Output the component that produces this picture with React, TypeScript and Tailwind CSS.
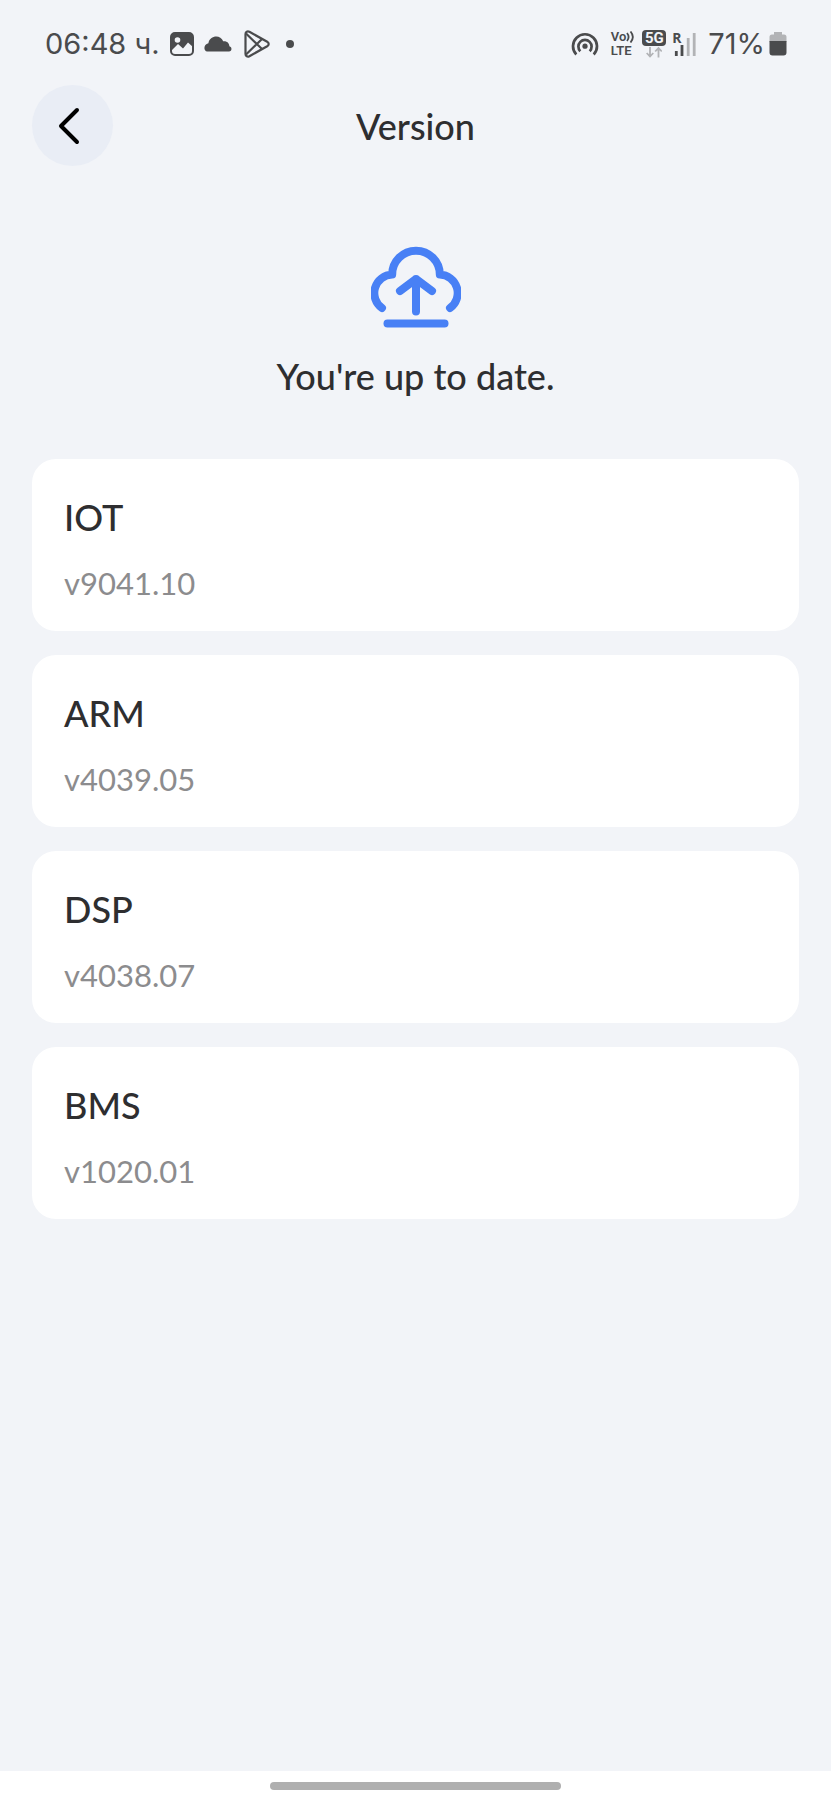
interface VersionCardProps {
  name: string;
  version: string;
}

const StatusBar = () => {
  return (
    <div className="flex items-center justify-between h-[84px] pl-[45px] pr-11 pt-1 text-[#4a4b4d]">
      <div className="flex items-center">
        <span className="font-['Inter',sans-serif] text-[29px] leading-9">06:48 ч.</span>
        <svg className="ml-2.5 w-6 h-6" viewBox="0 0 24 24" fill="none">
          <rect x="1" y="1" width="22" height="22" rx="4" stroke="currentColor" strokeWidth="2" />
          <path
            d="M1 5a4 4 0 0 1 4-4h14a4 4 0 0 1 4 4v10l-5-4.500-5 6-5-4.500-7 7z"
            fill="currentColor"
          />
          <circle cx="7.500" cy="8" r="2.800" fill="#f2f4f8" />
        </svg>
        <svg className="ml-2.5 w-7 h-4" viewBox="0 0 28 16" fill="currentColor">
          <path d="M3.200 15.500C-.8 14.800-.6 8.200 4.400 7.200 5.500-.5 16.500-2 19.200 5.300c4-.4 6 2 6.200 5 3 1 2.600 5-.4 5.200z" />
        </svg>
        <svg
          className="ml-3 w-[26px] h-7"
          viewBox="0 0 26 28"
          fill="none"
          stroke="currentColor"
          strokeWidth="2.200"
          strokeLinejoin="round"
        >
          <path d="M1.500 4v20c0 2.200 2 3.200 3.900 2.200l17.800-10c2-1.200 2-3.200 0-4.400L5.400 1.800C3.500.8 1.500 1.800 1.500 4z" />
          <path d="M2 3.500 18 19M2 24.500 18 9" />
        </svg>
        <span className="ml-4 w-2 h-2 rounded-full bg-[#4a4b4d]" />
      </div>

      <div className="flex items-center">
        <svg
          className="w-7 h-6"
          viewBox="0 0 28 24"
          fill="none"
          stroke="currentColor"
          strokeWidth="2.700"
        >
          <path d="M5.300 22.500a12 12 0 1 1 17.400 0" />
          <path d="M9.300 19.200a6.600 6.600 0 1 1 9.400 0" />
          <circle cx="14" cy="14.200" r="2.600" fill="currentColor" stroke="none" />
        </svg>
        <span className="ml-3 flex flex-col font-['Roboto',sans-serif] font-semibold text-[13px] leading-[14px]">
          <span className="flex items-center">
            Vo
            <svg className="w-2 h-3" viewBox="0 0 8 12" fill="none" stroke="currentColor" strokeWidth="1.800">
              <path d="M1 2c2 2.500 2 5.500 0 8M4.500.5c3 3.500 3 7.500 0 11" />
            </svg>
          </span>
          <span>LTE</span>
        </span>
        <span className="ml-2 flex flex-col items-center">
          <span className="w-6 h-4 rounded-sm bg-[#4a4b4d] text-[#f2f4f8] text-center font-['Roboto',sans-serif] font-bold text-[15px] leading-4">
            5G
          </span>
          <svg className="w-4 h-3" viewBox="0 0 16 12" fill="none" stroke="#b2b3b6" strokeWidth="1.800">
            <path d="M4 1v9.500M.7 7 4 10.500 7.300 7M12.500 11.500V2M9.200 5.500l3.300-3.500 3.300 3.500" />
          </svg>
        </span>
        <span className="relative ml-1.5 w-6 h-6">
          <span className="absolute left-0 top-0 font-['Open_Sans',sans-serif] font-bold text-[14px] leading-[12px]">
            R
          </span>
          <svg className="w-6 h-6" viewBox="0 0 24 24">
            <path d="M4.300 24v-5M10 24V13" stroke="currentColor" strokeWidth="2.800" />
            <path d="M16.200 24V6M22.200 24V1" stroke="#b2b3b6" strokeWidth="2.800" />
          </svg>
        </span>
        <span className="ml-3 font-['Inter',sans-serif] text-[29px] leading-9">71%</span>
        <svg className="ml-1 w-[18px] h-6" viewBox="0 0 18 24">
          <path d="M5 2.500V0h8v2.500h2a2.500 2.500 0 0 1 2.500 2.500v5H.5V5A2.500 2.500 0 0 1 3 2.500z" fill="#b2b3b6" />
          <path d="M.5 9h17v11.500a3 3 0 0 1-3 3h-11a3 3 0 0 1-3-3z" fill="currentColor" />
        </svg>
      </div>
    </div>
  );
};

const VersionCard = ({ name, version }: VersionCardProps) => {
  return (
    <li className="bg-white rounded-3xl px-8 pt-[34px] pb-[26px]">
      <h2 className="text-[36px] leading-[48px] font-medium text-[#2e2e30]">{name}</h2>
      <p className="mt-5 text-[31px] leading-[44px] text-[#8c8c8e]">{version}</p>
    </li>
  );
};

const App = () => {
  const modules: VersionCardProps[] = [
    { name: "IOT", version: "v9041.10" },
    { name: "ARM", version: "v4039.05" },
    { name: "DSP", version: "v4038.07" },
    { name: "BMS", version: "v1020.01" }
  ];

  return (
    <div className="min-h-screen flex flex-col bg-[#f2f4f8] font-['Lato',sans-serif]">
      <StatusBar />

      <header className="grid grid-cols-[81px_1fr_81px] items-center px-8 pt-px">
        <button
          type="button"
          aria-label="Back"
          className="w-[81px] h-[81px] rounded-full bg-[#e9edf5] flex items-center justify-center"
        >
          <svg
            className="mr-2 w-6 h-10"
            viewBox="0 0 24 40"
            fill="none"
            stroke="#000"
            strokeWidth="4"
            strokeLinecap="round"
            strokeLinejoin="round"
          >
            <path d="M20 4 4 20l16 16" />
          </svg>
        </button>
        <h1 className="text-center text-[36px] leading-[48px] font-medium text-[#2e2e30]">Version</h1>
      </header>

      <main className="flex-1 px-8">
        <div className="flex flex-col items-center pt-20">
          <svg
            className="w-[90px] h-[82px]"
            viewBox="0 0 90 82"
            fill="none"
            stroke="#4880f5"
            strokeWidth="8"
            strokeLinecap="round"
            strokeLinejoin="round"
          >
            <path d="M11 62A18.500 18.500 0 0 1 21.200 28.500A23.600 23.600 0 0 1 68.800 28.500A18.500 18.500 0 0 1 79 62" />
            <path d="M45 65.500V33M29 45l16-12L61 45" />
            <path d="M16.500 77.500h57" />
          </svg>
          <p className="mt-6 text-[36px] leading-[48px] font-medium text-[#2e2e30]">You're up to date.</p>
        </div>

        <ul className="mt-[59px] flex flex-col gap-6">
          {modules.map((item) => (
            <VersionCard key={item.name} name={item.name} version={item.version} />
          ))}
        </ul>
      </main>

      <footer className="h-[30px] bg-white flex justify-center pt-[11px]">
        <span className="w-[35%] h-2 rounded-full bg-[#afafaf]" />
      </footer>
    </div>
  );
};

export default App;
